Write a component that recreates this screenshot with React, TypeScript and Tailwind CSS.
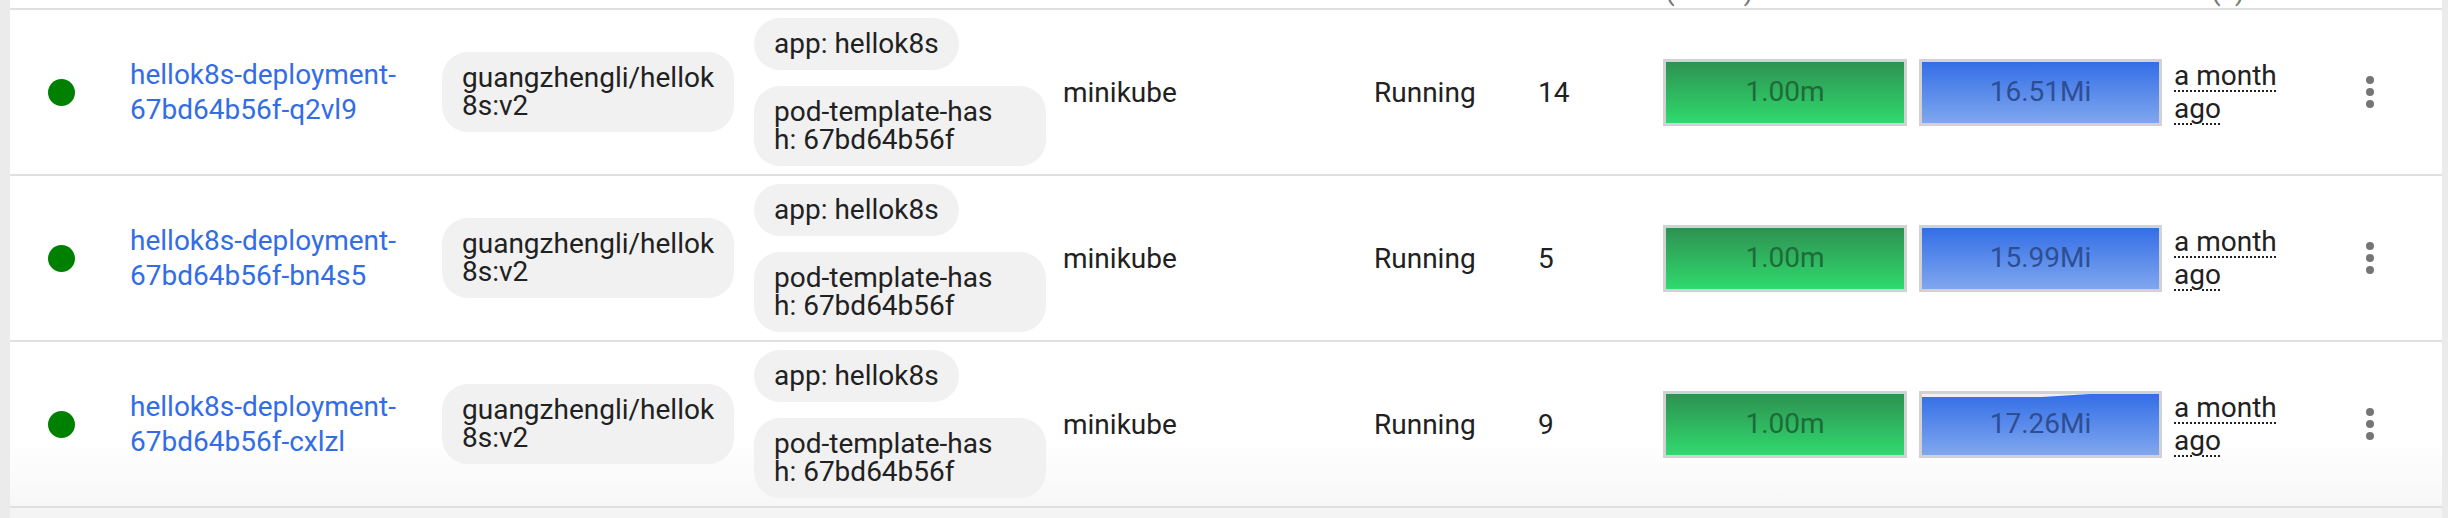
import React from 'react';

interface Pod {
  name: [string, string];
  restarts: number;
  cpu: string;
  mem: string;
  dip?: boolean;
}

const pods: Pod[] = [
  { name: ['hellok8s-deployment-', '67bd64b56f-q2vl9'], restarts: 14, cpu: '1.00m', mem: '16.51Mi' },
  { name: ['hellok8s-deployment-', '67bd64b56f-bn4s5'], restarts: 5, cpu: '1.00m', mem: '15.99Mi' },
  { name: ['hellok8s-deployment-', '67bd64b56f-cxlzl'], restarts: 9, cpu: '1.00m', mem: '17.26Mi', dip: true },
];

function Chip({ lines, className }: { lines: string[]; className?: string }) {
  return (
    <div className={`rounded-[26px] bg-[#f1f1f1] px-[20px] py-[12px] text-[28px] leading-[28px] text-[#212121] ${className ?? ''}`}>
      {lines.map((l, i) => (
        <div key={i} className="whitespace-nowrap">{l}</div>
      ))}
    </div>
  );
}

function Kebab() {
  return (
    <svg width="8" height="32" viewBox="0 0 8 32" fill="#757575">
      <circle cx="4" cy="4" r="4" />
      <circle cx="4" cy="16" r="4" />
      <circle cx="4" cy="28" r="4" />
    </svg>
  );
}

function PodRow({ pod, last }: { pod: Pod; last: boolean }) {
  return (
    <div
      className={`flex h-[166px] items-center border-t-2 border-[#e0e0e0] ${
        last ? 'border-b-2 h-[168px] bg-linear-to-b from-white from-60% to-[#f7f7f7]' : ''
      }`}
    >
      <div className="w-[120px] shrink-0 pl-[38px]">
        <div className="h-[27px] w-[27px] rounded-full bg-[#008000]" />
      </div>
      <div className="w-[312px] shrink-0 text-[28px] leading-[35px] text-[#326de6]">
        <div>{pod.name[0]}</div>
        <div>{pod.name[1]}</div>
      </div>
      <div className="w-[312px] shrink-0">
        <Chip lines={['guangzhengli/hellok', '8s:v2']} className="w-[292px]" />
      </div>
      <div className="flex w-[309px] shrink-0 flex-col items-start gap-[16px]">
        <Chip lines={['app: hellok8s']} />
        <Chip lines={['pod-template-has', 'h: 67bd64b56f']} className="w-[292px]" />
      </div>
      <div className="w-[311px] shrink-0 text-[28px] leading-[35px] text-[#212121]">minikube</div>
      <div className="w-[164px] shrink-0 text-[28px] leading-[35px] text-[#212121]">Running</div>
      <div className="w-[125px] shrink-0 text-[28px] leading-[35px] text-[#212121]">{pod.restarts}</div>
      <div className="w-[256px] shrink-0">
        <div className="flex h-[67px] w-[244px] items-center justify-center border-[3px] border-[#d2d2d2] bg-linear-to-b from-[#2d9251] to-[#2fda6e] text-[28px] text-[#1e6b39]">
          {pod.cpu}
        </div>
      </div>
      <div className="w-[255px] shrink-0">
        <div className="relative flex h-[67px] w-[243px] items-center justify-center border-[3px] border-[#d2d2d2] bg-linear-to-b from-[#336ee6] to-[#80a6ee] text-[28px] text-[#2d4e94]">
          {pod.dip && (
            <svg className="absolute left-0 top-0" width="240" height="4" viewBox="0 0 240 4">
              <polygon points="0,0 168,0 120,3 0,3" fill="#eef0f4" />
            </svg>
          )}
          {pod.mem}
        </div>
      </div>
      <div className="w-[150px] shrink-0 text-[28px] leading-[33px] text-[#212121]">
        <div><span className="underline decoration-dotted decoration-2 underline-offset-[5px]">a month</span></div>
        <div><span className="underline decoration-dotted decoration-2 underline-offset-[5px]">ago</span></div>
      </div>
      <div className="flex flex-1 pl-[42px]">
        <Kebab />
      </div>
    </div>
  );
}

export default function App() {
  return (
    <div className="flex h-[518px] w-[2448px] overflow-hidden bg-[#f4f4f4] font-['Roboto','Liberation_Sans',sans-serif]">
      <div className="w-[10px] shrink-0 bg-[#ebebeb]" />
      <div className="flex flex-1 flex-col">
        <div className="flex h-[8px] items-end overflow-hidden bg-white text-[28px] leading-[35px] text-[#757575]">
          <div className="w-[1655px] shrink-0" />
          <div className="w-[546px] shrink-0">(cores)</div>
          <div>(s)</div>
        </div>
        <div className="bg-white">
          {pods.map((p, i) => (
            <PodRow key={i} pod={p} last={i === pods.length - 1} />
          ))}
        </div>
      </div>
      <div className="w-[6px] shrink-0 bg-[#ebebeb]" />
    </div>
  );
}
